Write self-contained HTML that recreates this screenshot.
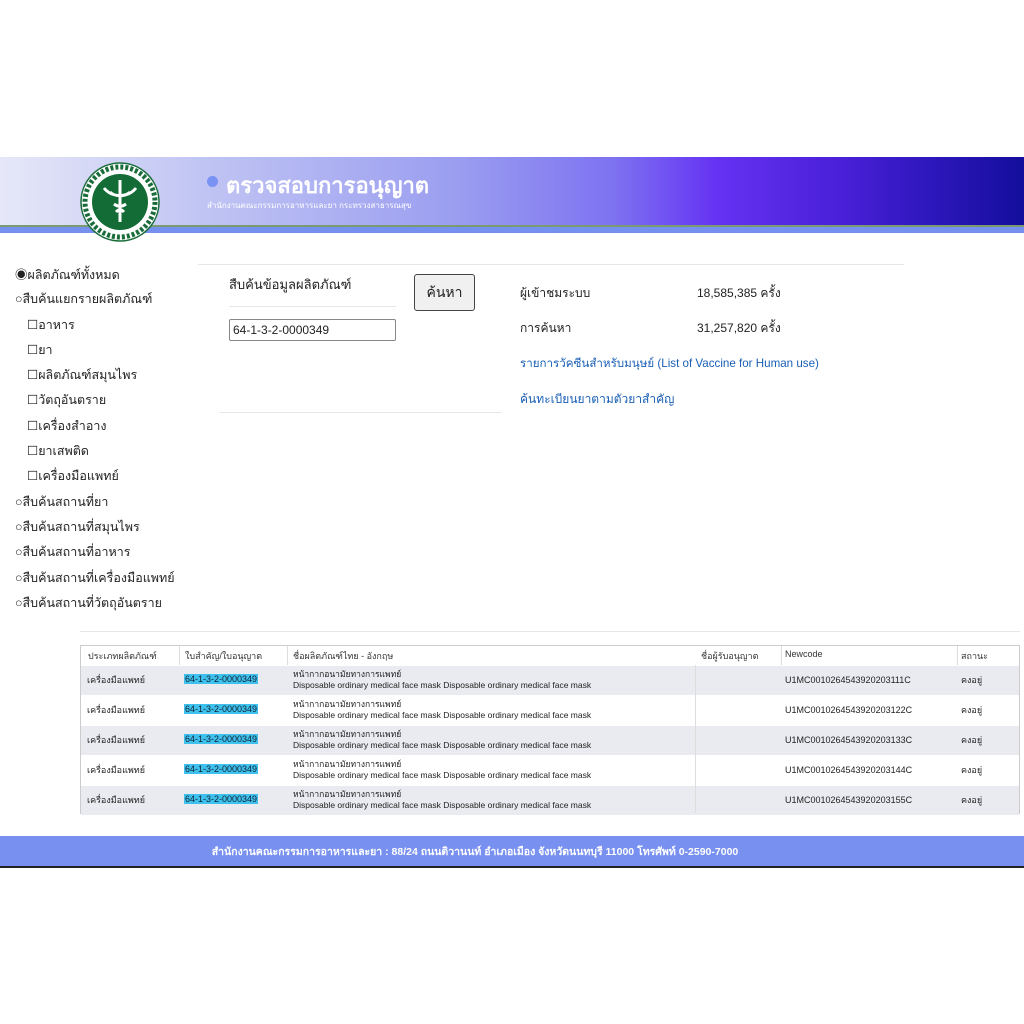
<!DOCTYPE html>
<html><head><meta charset="utf-8"><style>
*{margin:0;padding:0;box-sizing:border-box}
body{width:1024px;height:1024px;background:#fff;position:relative;overflow:hidden;font-family:"Liberation Sans","Noto Sans CJK SC",sans-serif;color:#222}
.a{position:absolute;white-space:nowrap}
.hdr{position:absolute;left:0;top:157px;width:1024px;height:68px;background:linear-gradient(90deg,#e6e8f8 0%,#c0c4f3 20%,#9a9df0 45%,#7d72f1 60%,#6532f2 70%,#4a20d8 82%,#2a16b8 92%,#140e9c 100%)}
.side{font-size:12.5px}
.tb{position:absolute;left:80px;top:645px;width:940px;height:169px;border:1px solid #ccc;font-size:9px;color:#333}
.row{position:absolute;left:0;width:938px;height:30px;border-top:1px solid #fff}
.hl{background:#3fc1ee;color:#123;padding:0 1px}
</style></head><body>
<div class="hdr"></div>
<div class="a" style="left:0;top:225px;width:1024px;height:2px;background:#7a9a70"></div>
<div class="a" style="left:0;top:227px;width:1024px;height:6px;background:#7590ee"></div>
<svg class="a" style="left:80px;top:162px" width="80" height="80" viewBox="0 0 80 80">
<circle cx="40" cy="40" r="39" fill="#fff" stroke="#1a6d3b" stroke-width="1.5"/>
<circle cx="40" cy="40" r="35" fill="none" stroke="#1a6d3b" stroke-width="5" stroke-dasharray="3 2"/>
<circle cx="40" cy="40" r="28" fill="#136b35"/>
<path d="M40 18v42M30 30c5 5 15 5 20 0M24 26c8 10 24 10 32 0M34 42c4 3 8 3 12 0M36 50c3-3 5-3 8 0" stroke="#fff" stroke-width="3" fill="none"/>
</svg>
<div class="a" style="left:207px;top:176px;width:11px;height:11px;border-radius:50%;background:#7a92f3"></div>
<div class="a" style="left:226px;top:168px;font-size:22px;font-weight:bold;color:#fff">ตรวจสอบการอนุญาต</div>
<div class="a" style="left:207px;top:199px;font-size:8px;color:#fff">สำนักงานคณะกรรมการอาหารและยา กระทรวงสาธารณสุข</div>

<div class="side">
<div class="a" style="left:15px;top:264px">◉ผลิตภัณฑ์ทั้งหมด</div>
<div class="a" style="left:15px;top:289px">○สืบค้นแยกรายผลิตภัณฑ์</div>
<div class="a" style="left:27px;top:315px">☐อาหาร</div>
<div class="a" style="left:27px;top:340px">☐ยา</div>
<div class="a" style="left:27px;top:365px">☐ผลิตภัณฑ์สมุนไพร</div>
<div class="a" style="left:27px;top:390px">☐วัตถุอันตราย</div>
<div class="a" style="left:27px;top:416px">☐เครื่องสำอาง</div>
<div class="a" style="left:27px;top:441px">☐ยาเสพติด</div>
<div class="a" style="left:27px;top:466px">☐เครื่องมือแพทย์</div>
<div class="a" style="left:15px;top:492px">○สืบค้นสถานที่ยา</div>
<div class="a" style="left:15px;top:517px">○สืบค้นสถานที่สมุนไพร</div>
<div class="a" style="left:15px;top:542px">○สืบค้นสถานที่อาหาร</div>
<div class="a" style="left:15px;top:568px">○สืบค้นสถานที่เครื่องมือแพทย์</div>
<div class="a" style="left:15px;top:593px">○สืบค้นสถานที่วัตถุอันตราย</div>
</div>
<div class="a" style="left:198px;top:264px;width:706px;height:1px;background:#e6e6e6"></div>
<div class="a" style="left:229px;top:274px;font-size:13px">สืบค้นข้อมูลผลิตภัณฑ์</div>
<div class="a" style="left:229px;top:306px;width:167px;height:1px;background:#e6e6e6"></div>
<div class="a" style="left:414px;top:274px;width:61px;height:37px;border:1px solid #444;border-radius:3px;background:#f0f0f0;font-size:14px;text-align:center;line-height:35px">ค้นหา</div>
<div class="a" style="left:229px;top:319px;width:167px;height:22px;border:1px solid #888;border-radius:2px;font-size:12px;padding:3px 0 0 3px">64-1-3-2-0000349</div>
<div class="a" style="left:220px;top:412px;width:282px;height:1px;background:#e6e6e6"></div>
<div class="a" style="left:520px;top:284px;font-size:12px">ผู้เข้าชมระบบ</div>
<div class="a" style="left:697px;top:284px;font-size:12px">18,585,385 ครั้ง</div>
<div class="a" style="left:520px;top:319px;font-size:12px">การค้นหา</div>
<div class="a" style="left:697px;top:319px;font-size:12px">31,257,820 ครั้ง</div>
<div class="a" style="left:520px;top:355px;font-size:11.6px;color:#1a5fb4">รายการวัคซีนสำหรับมนุษย์ (List of Vaccine for Human use)</div>
<div class="a" style="left:520px;top:390px;font-size:12px;color:#1a5fb4">ค้นทะเบียนยาตามตัวยาสำคัญ</div>
<div class="a" style="left:80px;top:631px;width:940px;height:1px;background:#e6e6e6"></div>

<div class="tb">
<div class="a" style="left:7px;top:3px">ประเภทผลิตภัณฑ์</div>
<div class="a" style="left:104px;top:3px">ใบสำคัญ/ใบอนุญาต</div>
<div class="a" style="left:212px;top:3px">ชื่อผลิตภัณฑ์ไทย - อังกฤษ</div>
<div class="a" style="left:620px;top:3px">ชื่อผู้รับอนุญาต</div>
<div class="a" style="left:704px;top:3px">Newcode</div>
<div class="a" style="left:880px;top:3px">สถานะ</div>
<div class="row" style="top:19px;background:#e9ebf0"></div>
<div class="row" style="top:49px;background:#fff"></div>
<div class="row" style="top:79px;background:#e9ebf0"></div>
<div class="row" style="top:109px;background:#fff"></div>
<div class="row" style="top:139px;background:#e9ebf0"></div>
<div class="a" style="left:614px;top:19px;width:1px;height:148px;background:#ddd"></div>
<div class="a" style="left:700px;top:0;width:1px;height:19px;background:#ddd"></div>
<div class="a" style="left:876px;top:0;width:1px;height:19px;background:#ddd"></div>
<div class="a" style="left:98px;top:0;width:1px;height:19px;background:#ddd"></div>
<div class="a" style="left:206px;top:0;width:1px;height:19px;background:#ddd"></div>
</div>
<div id="rows"></div>
<script>
var h='';for(var i=0;i<5;i++){var y=673+i*30;
h+='<div class="a" style="left:87px;top:'+(y)+'px;font-size:9px">เครื่องมือแพทย์</div>'+
'<div class="a" style="left:184px;top:'+(y+1)+'px;font-size:9px"><span class="hl">64-1-3-2-0000349</span></div>'+
'<div class="a" style="left:293px;top:'+(y-6)+'px;font-size:8.5px">หน้ากากอนามัยทางการแพทย์</div>'+
'<div class="a" style="left:293px;top:'+(y+7)+'px;font-size:8.5px">Disposable ordinary medical face mask Disposable ordinary medical face mask</div>'+
'<div class="a" style="left:785px;top:'+(y+2)+'px;font-size:9px">U1MC00102645439202031'+(11*(i+1))+'C</div>'+
'<div class="a" style="left:961px;top:'+(y)+'px;font-size:9px">คงอยู่</div>';}
document.getElementById('rows').innerHTML=h;
</script>
<div class="a" style="left:0;top:836px;width:1024px;height:30px;background:#7890f0"></div>
<div class="a" style="left:0;top:843px;width:1024px;text-align:center;font-size:10.5px;font-weight:bold;color:#fff"><span style="position:relative;left:-37px">สำนักงานคณะกรรมการอาหารและยา : 88/24 ถนนติวานนท์ อำเภอเมือง จังหวัดนนทบุรี 11000 โทรศัพท์ 0-2590-7000</span></div>
<div class="a" style="left:0;top:866px;width:1024px;height:2px;background:#222"></div>
</body></html>
